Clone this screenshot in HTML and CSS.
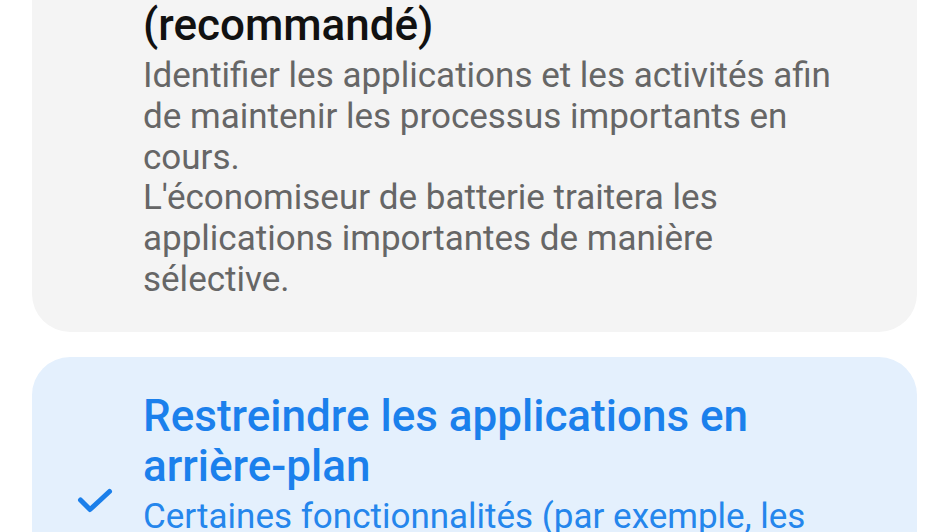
FILE: index.html
```html
<!DOCTYPE html>
<html lang="fr">
<head>
<meta charset="utf-8">
<link rel="stylesheet" href="styles.css">
</head>
<body>
<div class="page">
  <div class="card card-grey">
    <div class="check-col"></div>
    <div class="text-col">
      <div class="title">(recommandé)</div>
      <div class="desc">Identifier les applications et les activités afin de maintenir les processus importants en cours.<br>L'économiseur de batterie traitera les applications importantes de manière sélective.</div>
    </div>
  </div>
  <div class="card card-blue">
    <div class="check-col">
      <svg class="check" viewBox="0 0 36 26" width="36" height="26"><path d="M3.5 12 L13 21.5 L32.5 3.5" fill="none" stroke="#1b7fea" stroke-width="5" stroke-linecap="round" stroke-linejoin="round"/></svg>
    </div>
    <div class="text-col">
      <div class="title blue">Restreindre les applications en arrière-plan</div>
      <div class="desc blue-desc">Certaines fonctionnalités (par exemple, les</div>
    </div>
  </div>
</div>
</body>
</html>
```
FILE: styles.css
```css
html, body {
  margin: 0;
  padding: 0;
  background: #ffffff;
  overflow: hidden;
}
body {
  font-family: Roboto, "Noto Sans", sans-serif;
  width: 945px;
  height: 532px;
}
.page {
  padding: 0 28px 0 32px;
  display: flex;
  flex-direction: column;
  gap: 25px;
}
.card {
  display: flex;
  border-radius: 38px;
}
.card-grey {
  background: #f4f4f4;
  margin-top: -40px;
  padding: 40px 0 31px 0;
  border-radius: 0 0 38px 38px;
}
.card-blue {
  background: #e4f0fd;
  padding: 34px 0 60px 0;
}
.check-col {
  width: 111px;
  flex: none;
}
.check {
  display: block;
  margin-top: 97px;
  margin-left: 45px;
}
.text-col {
  flex: 1;
  padding-right: 67px;
}
.title {
  font-size: 44px;
  font-weight: 500;
  line-height: 50px;
  color: #111111;
}
.title.blue {
  color: #1b80ec;
}
.desc {
  font-size: 35px;
  line-height: 40.8px;
  color: #666666;
  margin-top: 6px;
}
.blue-desc {
  color: #2586ec;
}
```
